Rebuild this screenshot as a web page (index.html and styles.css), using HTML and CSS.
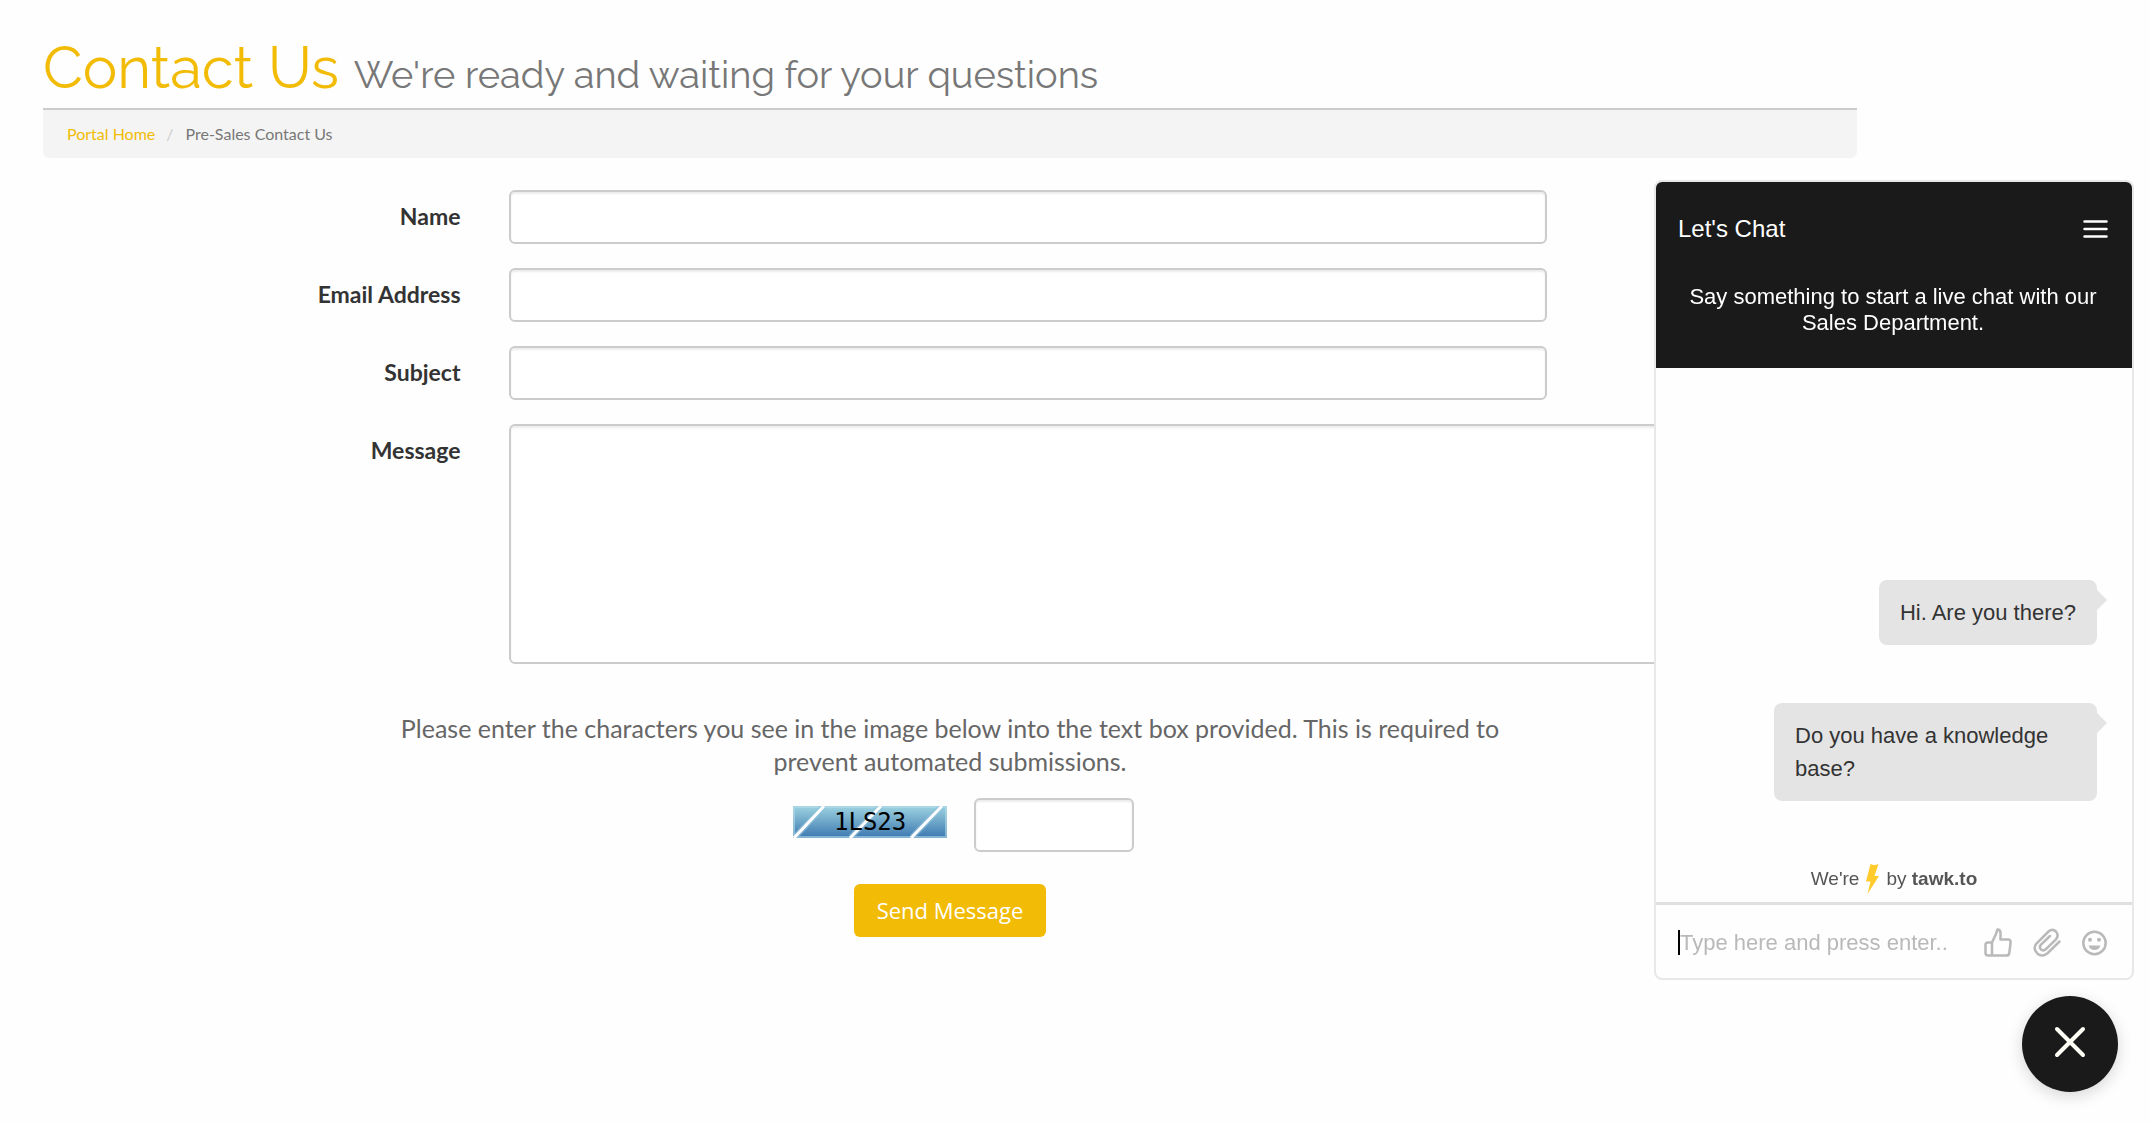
FILE: index.html
```html
<!DOCTYPE html>
<html lang="en">
<head>
  <meta charset="utf-8">
  <meta name="viewport" content="width=device-width, initial-scale=1">
  <title>Contact Us</title>
  <link rel="stylesheet" href="styles.css">
</head>

<body>
  <main class="page">
    <header class="page-header">
      <h1>Contact Us <small>We're ready and waiting for your questions</small></h1>
    </header>

    <nav aria-label="Breadcrumb">
      <ol class="breadcrumb">
        <li><a href="#">Portal Home</a></li>
        <li>Pre-Sales Contact Us</li>
      </ol>
    </nav>

    <form class="contact-form" action="#" method="post">
      <div class="form-row">
        <label for="name">Name</label>
        <div class="field"><input class="form-control" type="text" id="name" name="name"></div>
      </div>
      <div class="form-row">
        <label for="email">Email Address</label>
        <div class="field"><input class="form-control" type="email" id="email" name="email"></div>
      </div>
      <div class="form-row">
        <label for="subject">Subject</label>
        <div class="field"><input class="form-control" type="text" id="subject" name="subject"></div>
      </div>
      <div class="form-row">
        <label for="message">Message</label>
        <div class="field field-wide"><textarea class="form-control" id="message" name="message"></textarea></div>
      </div>

      <!-- Captcha -->
      <div class="captcha">
        <p id="captcha-help">Please enter the characters you see in the image below into the text box provided. This is required to prevent automated submissions.</p>
        <div class="captcha-row">
          <svg class="captcha-img" width="154" height="32" viewBox="0 0 154 32">
            <defs>
              <linearGradient id="sky" x1="0" y1="0" x2="0" y2="1">
                <stop offset="0" stop-color="#9dd3e0"/>
                <stop offset="1" stop-color="#3c78b0"/>
              </linearGradient>
            </defs>
            <rect width="154" height="32" fill="url(#sky)"/>
            <rect x="1" y="1" width="152" height="30" fill="none" stroke="#b4dbe8" stroke-opacity=".6" stroke-width="2"/>
            <g stroke="#8fbfdc" stroke-width="6" stroke-opacity=".6">
              <path d="M2 31L31 0M58 31L88 0M119 31L149 0"/>
            </g>
            <g stroke="#fff" stroke-width="3">
              <path d="M1 32L31 0M57 32L88 0M118 32L149 0"/>
            </g>
            <text x="41" y="24">1LS23</text>
          </svg>
          <input class="form-control code" type="text" name="code" maxlength="5" aria-labelledby="captcha-help">
        </div>
      </div>

      <div class="actions">
        <button class="btn" type="submit">Send Message</button>
      </div>
    </form>
  </main>

  <!-- Chat widget -->
  <aside class="chat" aria-label="Live chat">
    <header class="chat-header">
      <div class="chat-title">
        <h2>Let's Chat</h2>
        <button class="icon-btn" type="button" aria-label="Menu">
          <svg width="25" height="20" viewBox="0 0 25 20" stroke="#fff" stroke-width="2.5" stroke-linecap="round">
            <path d="M1.5 2.5h22M1.5 10h22M1.5 17.5h22"/>
          </svg>
        </button>
      </div>
      <p>Say something to start a live chat with our Sales Department.</p>
    </header>

    <div class="chat-body">
      <p class="bubble">Hi. Are you there?</p>
      <p class="bubble">Do you have a knowledge base?</p>
      <p class="powered">
        <span>We're</span>
        <svg width="13" height="30" viewBox="0 0 13 30" fill="#ffcb2d">
          <path d="M4.5 0Q8.5 2 12.5 0L8.5 12H13L1.5 30L4.5 17.5H0Z"/>
        </svg>
        <span>by <b>tawk.to</b></span>
      </p>
    </div>

    <div class="chat-input">
      <span class="caret"></span>
      <input type="text" placeholder="Type here and press enter.." aria-label="Chat message">
      <div class="chat-tools">
        <button class="icon-btn" type="button" aria-label="Like">
          <svg width="28" height="29" viewBox="0 0 28 29" fill="none" stroke="#b9b9b9" stroke-width="2.5" stroke-linejoin="round">
            <path d="M8 14.5H4A2.5 2.5 0 0 0 1.5 17V25A2.5 2.5 0 0 0 4 27.5H22.5Q25 27.5 25.3 25L26.6 14.5Q26.8 11.5 24 11.5H16.5V5Q16.5 1.5 13.5 1.5L12 6L8 14.5V27"/>
          </svg>
        </button>
        <button class="icon-btn" type="button" aria-label="Attach a file">
          <svg width="28" height="29" viewBox="0 0 28 29" fill="none" stroke="#b9b9b9" stroke-width="2.5" stroke-linecap="round">
            <path d="M26.5 13.5L14.5 25.2Q9 29.5 4.5 25.7Q-.7 20.5 3.5 15.5L15.5 3.5Q19.5 .3 22.9 3.5Q26.3 7 23 11.3L12.7 21.3Q10.3 23.3 8 21.5Q5.8 19 8 16.7L17 8"/>
          </svg>
        </button>
        <button class="icon-btn" type="button" aria-label="Emoji">
          <svg width="25" height="29" viewBox="0 0 25 29">
            <circle cx="12.5" cy="15" r="11.2" fill="none" stroke="#b9b9b9" stroke-width="2.5"/>
            <circle cx="8" cy="11.8" r="2" fill="#b9b9b9"/>
            <circle cx="17" cy="11.8" r="2" fill="#b9b9b9"/>
            <path d="M6.5 17.5H18.5Q17 22 12.5 22T6.5 17.5Z" fill="#b9b9b9"/>
          </svg>
        </button>
      </div>
    </div>
  </aside>

  <button class="chat-toggle" type="button" aria-label="Close chat">
    <svg width="32" height="32" viewBox="0 0 32 32" stroke="#fffff6" stroke-width="4" stroke-linecap="round">
      <path d="M3 3L29 29M29 3L3 29"/>
    </svg>
  </button>
</body>
</html>
```
FILE: styles.css
```css
/* Reset & variables */
* { box-sizing: border-box; margin: 0; padding: 0; }
:root {
  --primary: #f2bb05;
  --border: #ccc;
  --dark: #1a1a1a;
  --muted: #777;
  --icon: #b9b9b9;
  --gutter: 24px;
  --radius: 6px;
}
body {
  font-family: Lato, sans-serif;
  font-size: 25px;
  line-height: 33px;
  color: #666;
  background: #fefefe;
}
button, input, textarea {
  font: inherit;
}
a {
  color: var(--primary);
  text-decoration: none;
}

/* Page */
.page {
  margin: 0 269px 0 19px;
  padding-top: 29px;
}
.page-header {
  margin: 0 var(--gutter);
  padding-bottom: 1px;
  border-bottom: 2px solid var(--border);
}
.page-header h1 {
  font-family: Raleway, Lato, sans-serif;
  font-size: 58px;
  font-weight: 400;
  line-height: 78px;
  color: var(--primary);
}
.page-header small {
  font-size: 38px;
  line-height: 1;
  color: var(--muted);
}

.breadcrumb {
  display: flex;
  list-style: none;
  margin: 0 var(--gutter) 32px;
  padding: 12px var(--gutter);
  font-size: 16px;
  line-height: 24px;
  color: var(--muted);
  background: #f4f4f4;
  border-radius: 0 0 var(--radius) var(--radius);
}
.breadcrumb li + li::before {
  content: "/";
  padding: 0 12px 0 11px;
  color: #ccc;
}

/* Form */
.form-row {
  display: flex;
  margin-bottom: 24px;
}
.form-row label {
  width: 25%;
  padding: 10px var(--gutter) 0;
  font-size: 23px;
  font-weight: 700;
  color: #333;
  text-align: right;
}
.field {
  width: 58.3333%;
  padding: 0 var(--gutter);
}
.field-wide {
  width: 75%;
}
.form-control {
  display: block;
  width: 100%;
  height: 54px;
  padding: 9px 18px;
  color: #555;
  background: #fff;
  border: 2px solid var(--border);
  border-radius: var(--radius);
  box-shadow: inset 0 2px 2px rgba(0,0,0,0.075);
}
textarea.form-control {
  height: 240px;
  resize: none;
}

/* Captcha */
.captcha {
  width: 66.6667%;
  margin: 48px auto 32px;
  padding: 0 40px;
  text-align: center;
}
.captcha-row {
  display: flex;
  justify-content: center;
  gap: 27px;
  margin-top: 20px;
  padding-left: 28px;
}
.captcha-img {
  margin-top: 8px;
}
.captcha-img text {
  font-family: "DejaVu Sans Mono", monospace;
  font-size: 24px;
  fill: #000;
}
.code {
  width: 160px;
}
.actions {
  text-align: center;
}
.btn {
  padding: 10px 23px;
  font-family: "Open Sans", sans-serif;
  font-size: 22px;
  line-height: 33px;
  color: #fff;
  background: var(--primary);
  border: 0;
  border-radius: var(--radius);
  cursor: pointer;
}

/* Chat window */
.chat {
  position: fixed;
  right: 16px;
  bottom: 143px;
  display: flex;
  flex-direction: column;
  width: 480px;
  height: 800px;
  overflow: hidden;
  font-family: "Liberation Sans", Arial, sans-serif;
  font-size: 22px;
  color: #333;
  background: #fefefe;
  border: 2px solid #e8e8e8;
  border-radius: 8px;
}
.chat-header {
  height: 186px;
  padding: 30px 24px 0 22px;
  color: #fff;
  background: var(--dark);
}
.chat-header p {
  margin-top: 39px;
  line-height: 26px;
  text-align: center;
}
.chat-title {
  display: flex;
  align-items: center;
  justify-content: space-between;
}
.chat-title h2 {
  font-size: 24px;
  font-weight: 400;
}
.icon-btn {
  display: flex;
  background: none;
  border: 0;
  cursor: pointer;
}

/* Messages */
.chat-body {
  flex: 1;
  display: flex;
  flex-direction: column;
  align-items: flex-end;
  justify-content: flex-end;
}
.bubble {
  position: relative;
  max-width: 323px;
  margin: 0 35px 58px;
  padding: 16px 21px;
  background: #e4e4e4;
  border-radius: 8px;
}
.bubble::after {
  content: "";
  position: absolute;
  top: 10px;
  right: -10px;
  border: 10px solid transparent;
  border-right: 0;
  border-left-color: #e4e4e4;
}
.powered {
  display: flex;
  align-items: center;
  align-self: center;
  gap: 7px;
  margin: 3px 0 7px;
  font-size: 19px;
  color: #555;
}

/* Message box */
.chat-input {
  display: flex;
  align-items: center;
  height: 76px;
  padding: 2px 25px 0 22px;
  border-top: 3px solid #e0e0e0;
}
.caret {
  width: 2px;
  height: 25px;
  background: #000;
}
.chat-input input {
  flex: 1;
  min-width: 0;
  background: none;
  border: 0;
  outline: none;
}
.chat-input input::placeholder {
  color: var(--icon);
  opacity: 1;
}
.chat-tools {
  display: flex;
  gap: 21px;
}

/* Round close button */
.chat-toggle {
  position: fixed;
  right: 32px;
  bottom: 31px;
  display: flex;
  align-items: center;
  justify-content: center;
  width: 96px;
  height: 96px;
  padding-bottom: 4px;
  background: var(--dark);
  border: 0;
  border-radius: 50%;
  box-shadow: 0 4px 16px rgba(0,0,0,0.16);
  cursor: pointer;
}
```
